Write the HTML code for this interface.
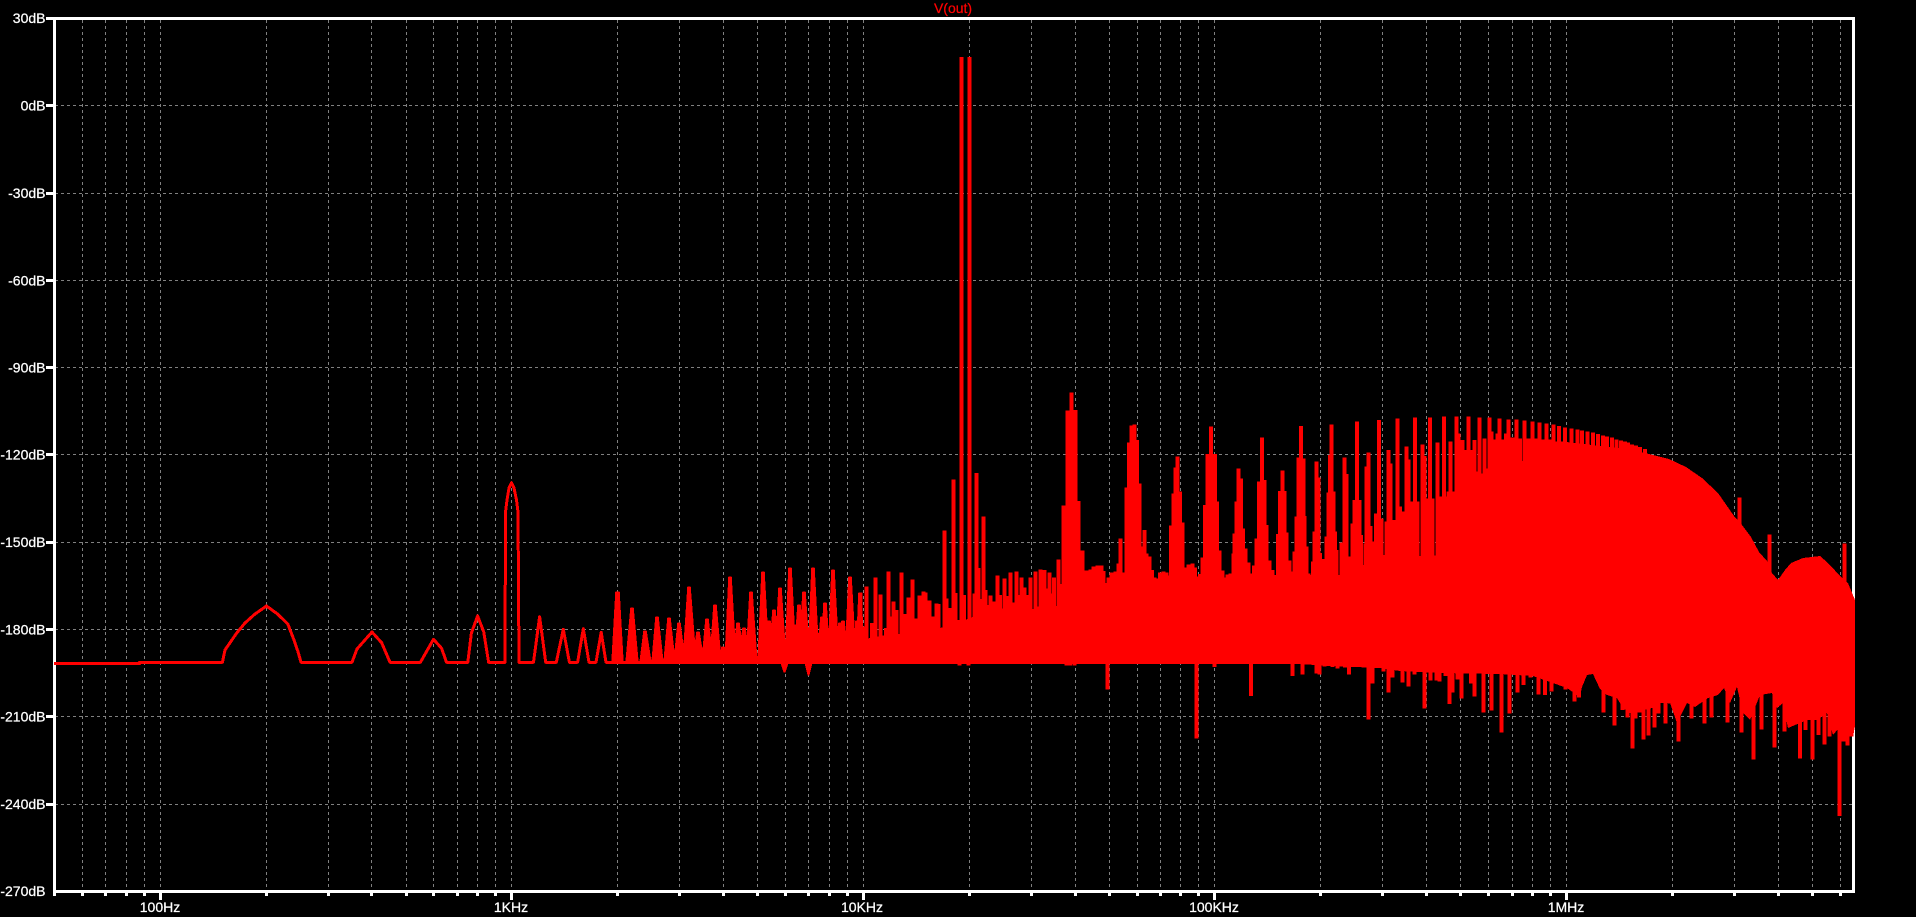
<!DOCTYPE html>
<html><head><meta charset="utf-8"><title>V(out)</title>
<style>
html,body{margin:0;padding:0;background:#000;width:1916px;height:917px;overflow:hidden}
svg{display:block}
text{font-family:"Liberation Sans",sans-serif;font-size:14px;fill:#fff;stroke:#fff;stroke-width:.25px}
</style></head><body>
<svg width="1916" height="917" viewBox="0 0 1916 917" xmlns="http://www.w3.org/2000/svg">
<rect width="1916" height="917" fill="#000"/>
<g stroke="#808080" stroke-width="1" stroke-dasharray="3 3" fill="none" shape-rendering="crispEdges">
<path d="M55 105.5H1853M55 193.5H1853M55 280.5H1853M55 367.5H1853M55 454.5H1853M55 542.5H1853M55 629.5H1853M55 716.5H1853M55 804.5H1853"/>
<path d="M82.5 20V890M105.5 20V890M126.5 20V890M144.5 20V890M160.5 20V890M266.5 20V890M328.5 20V890M371.5 20V890M406.5 20V890M433.5 20V890M457.5 20V890M477.5 20V890M495.5 20V890M511.5 20V890M617.5 20V890M679.5 20V890M723.5 20V890M757.5 20V890M785.5 20V890M808.5 20V890M829.5 20V890M847.5 20V890M863.5 20V890M969.5 20V890M1031.5 20V890M1075.5 20V890M1109.5 20V890M1137.5 20V890M1160.5 20V890M1180.5 20V890M1198.5 20V890M1214.5 20V890M1320.5 20V890M1382.5 20V890M1426.5 20V890M1460.5 20V890M1488.5 20V890M1512.5 20V890M1532.5 20V890M1550.5 20V890M1566.5 20V890M1672.5 20V890M1734.5 20V890M1778.5 20V890M1812.5 20V890M1840.5 20V890"/>
</g>
<g stroke="#fff" fill="none" shape-rendering="crispEdges">
<path stroke-width="3" d="M46 18.5H1855M54.5 17V893M53 891.5H1855M1853.5 17V893"/>
<path stroke-width="3" d="M46 105.5H54M46 193.5H54M46 280.5H54M46 367.5H54M46 454.5H54M46 542.5H54M46 629.5H54M46 716.5H54M46 804.5H54"/>
<path stroke-width="3" d="M54.5 892V896M82.5 892V896M105.5 892V896M126.5 892V896M144.5 892V896M266.5 892V896M328.5 892V896M371.5 892V896M406.5 892V896M433.5 892V896M457.5 892V896M477.5 892V896M495.5 892V896M617.5 892V896M679.5 892V896M723.5 892V896M757.5 892V896M785.5 892V896M808.5 892V896M829.5 892V896M847.5 892V896M969.5 892V896M1031.5 892V896M1075.5 892V896M1109.5 892V896M1137.5 892V896M1160.5 892V896M1180.5 892V896M1198.5 892V896M1320.5 892V896M1382.5 892V896M1426.5 892V896M1460.5 892V896M1488.5 892V896M1512.5 892V896M1532.5 892V896M1550.5 892V896M1672.5 892V896M1734.5 892V896M1778.5 892V896M1812.5 892V896M1840.5 892V896"/>
<path stroke-width="3" d="M160.5 892V900M511.5 892V900M863.5 892V900M1214.5 892V900M1566.5 892V900"/>
</g>
<g text-anchor="end">
<text x="45.5" y="23">30dB</text>
<text x="45.5" y="110.5">0dB</text>
<text x="45.5" y="198">-30dB</text>
<text x="45.5" y="285.5">-60dB</text>
<text x="45.5" y="372.5">-90dB</text>
<text x="45.5" y="459.5">-120dB</text>
<text x="45.5" y="547">-150dB</text>
<text x="45.5" y="634.5">-180dB</text>
<text x="45.5" y="721.5">-210dB</text>
<text x="45.5" y="809">-240dB</text>
<text x="45.5" y="896">-270dB</text>
</g>
<g text-anchor="middle">
<text x="160" y="912">100Hz</text>
<text x="511" y="912">1KHz</text>
<text x="862" y="912">10KHz</text>
<text x="1214" y="912">100KHz</text>
<text x="1566" y="912">1MHz</text>
<text x="953" y="13" style="fill:#ff0000;stroke:#ff0000">V(out)</text>
</g>
<g shape-rendering="crispEdges">
<path fill="none" stroke="#f00" stroke-width="3" stroke-linejoin="round" d="M54 663.5H139.5V662.3H222.4L225 650L236.7 633L245 623L255 614L266.5 606L277.5 614L287.8 624L294 640L298 651.7L301 662.3H352L357 649L372 632L381.6 642.7L390 662.3H420.4L433.5 639.3L441.6 648.3L446.5 662.3H467.8L471.4 633L477.6 616L483.7 631.7L488.6 662.3H505L505.5 512L507 500L509 488L511.5 482.7L514 488L516.5 500L518 512L519 662.3H533.5L539.6 616.7L545.7 662.3H556.3L563.3 629.3L569.4 662.3H577.6L583.3 628.7L589 662.3H596L601.2 632.3L606 662.3H760"/>
<path fill="#f00" stroke="#f00" stroke-width="1.5" d="M612 663L616 592H619L623 663ZM626 663L631 608H633L638 663ZM640 663L644 631H646L651 663ZM652 663L656 617H658L663 663ZM664 663L668 618H670L675 663ZM674 663L678 623H680L685 663ZM683 663L688 587H690L696 663ZM693 663L697 632H699L704 663ZM702 663L706 619H708L713 663ZM710 663L714 605H716L721 663ZM719 663L722 647H724L728 663ZM725 663L729 577H731L736 663ZM733 663L737 623H739L744 663ZM739 663L743 628H745L750 663ZM746 663L750 592H752L757 663ZM754 663L757 657H758L762 663ZM758 663L762 572H764L769 663ZM765 663L768 621H770L774 663ZM769 663L773 610H775L780 663ZM775 663L779 588H781L786 663ZM785 663L789 568H791L796 663ZM791 663L794 625H796L800 663ZM794 663L798 605H800L804 663ZM799 663L803 592H805L810 663ZM808 663L812 568H814L819 663ZM813 663L816 633H818L822 663ZM817 663L821 617H823L827 663ZM821 663L824 603H826L830 663ZM825 663L828 637H830L834 663ZM828 663L832 570H834L839 663ZM833 663L836 635H838L841 663ZM836 663L839 623H841L845 663ZM839 663L842 621H844L848 663ZM843 663L846 642H847L850 663ZM845 663L849 577H851L856 663ZM850 663L853 633H855L858 663ZM853 663L856 621H858L862 663ZM856 663L859 593H861L864 663Z"/>
<path fill="#f00" stroke="#f00" stroke-width="1" d="M781 663L784 672H785L788 663ZM805 663L808 675H809L812 663Z"/>
<polygon fill="#f00" points="760,664 760,648 782,648 782,664 788,664 788,642 806,642 806,664 811,664 811,640 835,640 860,640 880,636 900,634 920,630 940,628 960,622 975,616 990,612 1010,612 1040,608 1060,606 1066,598 1075,596 1085,588 1105,583 1196,583 1260,580 1300,575 1340,575 1365,564 1384,562 1410,556 1434,556 1450,548 1470,540 1480,532 1490,526 1500,522 1510,518 1514,506 1518,468 1522,461 1532,461 1535,444 1544,441 1564,441.7 1592,445 1625,449 1645,453 1669,459 1686,467 1702,478 1718,493 1734,516 1742,525 1751,537 1759,552 1767,561 1772,573 1778,580 1785,570 1791,563 1803,558 1820,556 1828,563 1842,578 1848,583 1855,600 1855,726 1853,737 1843,723 1833,735 1827,713 1817,720 1807,720 1788,728 1783,703 1777,708 1772,693 1760,695 1750,720 1743,713 1737,687 1730,703 1724,688 1718,695 1708,698 1695,707 1687,703 1677,723 1670,703 1660,703 1652,708 1637,712 1630,713 1623,708 1617,698 1607,695 1600,689 1593,674 1587,675 1582,687 1580,697 1567,688 1550,682 1533,676 1500,674 1440,673 1400,671 1380,668 1330,666 1300,664"/>
<path fill="none" stroke="#f00" stroke-width="4" d="M860.7 592.7V664M863.3 626.7V664M866.3 586.7V664M869 641.7V664M872 623V664M875.3 577.7V664M878 641.7V664M880.3 594.7V664M883.3 637V664M886 628V664M888.3 571.7V664M890.7 616.7V664M893.3 601.7V664M896.7 610V664M898.7 635V664M901.3 572.7V664M904.7 614V664M908.3 597.3V664M910.3 646.7V664M912.3 579.3V664M916 618.7V664M919.3 595.7V664M921.3 626.7V664M923.7 591.7V664M925.7 592.7V664M927.7 605V664M929.7 600.7V664M932.3 616.7V664M936.3 603.3V664M938.7 604V664M941 633V664M944.3 530.7V664M946.7 598.3V664M949.3 608V664M953.3 479.3V664M955.7 593V664M957.7 620V664M961.3 57V664M964 595V664M966 628V664M969.3 57V664M972.7 623V664M974.7 593.3V664M976.7 473V664M978.7 568V664M980.7 599V664M983.3 516.7V664M985.3 590V664M986.7 610V664M988.3 605V664M990.7 595.7V664M992.3 615.7V664M994.3 601.7V664M997.3 575.7V664M1000 595V664M1002.3 608.3V664M1004.3 578.3V664M1007 596V664M1008.7 617.3V664M1010.3 572.7V664M1013.3 602.7V664M1016.3 571.7V664M1018.7 595V664M1021.3 577.7V664M1024.7 587.7V664M1027 595V664M1030.3 577.3V664M1033 616.7V664M1035.3 571.7V664M1038 606.7V664M1040.3 569.7V664M1042.3 595V664M1044.3 570V664M1046.7 588.3V664M1049.3 572.7V664M1051.7 593.3V664M1054 577.3V664M1056.7 606V664M1058.3 559.3V664M1060.3 611V664M1062 584V664M1063.6 505.5V664M1067.3 410.7V664M1069.3 528.3V664M1071.3 392.7V664M1073.3 535.7V664M1075.3 410V664M1078.3 501V664M1080.3 581.7V664M1082.3 550.7V664M1084.3 586.7V664M1086.3 570.7V664M1088.3 590V664M1090.3 569.3V664M1093.3 566.7V664M1095.3 590V664M1097.3 565.7V664M1099.3 566.7V664M1101.3 565.7V664M1103.3 571V664M1105.3 585V664M1108.3 577.3V664M1111.7 572.7V664M1115.3 571.7V664M1118.3 563.3V664M1120.3 538.3V664M1123.3 572.7V664M1126.3 487.7V664M1129 442.7V664M1131.3 425.3V664M1134.7 424.3V664M1137 440V664M1139.3 483.3V664M1142 546.7V664M1144.3 530V664M1146.7 553.3V664M1149.3 556.7V664M1152 570V664M1154.3 577.3V664M1157.3 578.7V664M1160 572.3V664M1163.3 571.7V664M1166.7 572.7V664M1169 575.7V664M1171 525.7V664M1173.3 493.3V664M1175.3 467.3V664M1177.3 456.7V664M1180 491.7V664M1182.7 522.7V664M1185.3 567.3V664M1188.3 564.7V664M1192.3 563.3V664M1195 567.3V664M1196.3 585V664M1198.3 576.7V664M1200 574V664M1202.3 557.7V664M1205 505V664M1207.3 454V664M1211 426.7V664M1215 454V664M1217 501.7V664M1219.3 550.7V664M1222.7 570.7V664M1225 577.3V664M1227.7 574.3V664M1230.7 573.3V664M1233.3 553.3V664M1234.7 533.3V664M1236.7 501.7V664M1238.7 468.7V664M1241 478.3V664M1243 528.3V664M1245.3 548.3V664M1248.3 562.3V664M1251.3 573.3V664M1254 565.7V664M1256.7 538.3V664M1259 481.7V664M1262 437.3V664M1264.3 480V664M1266.7 525V664M1269.3 560.7V664M1272.3 570V664M1275.3 575V664M1278 534V664M1280 491V664M1282.3 470.3V664M1284.3 491V664M1286.7 532.7V664M1289.7 560.7V664M1292 571.7V664M1294.3 551.7V664M1296.7 516.7V664M1298.7 457.7V664M1301 426V664M1303.3 458.3V664M1304.7 516V664M1306.7 546.7V664M1308.7 573.3V664M1311 575.7V664M1313 561.7V664M1314.3 531.7V664M1316.3 461.7V664M1318.3 477.3V664M1320 553V664M1322.3 559V664M1324.3 563.3V664M1326.7 536.7V664M1328.3 492.3V664M1330 455V664M1331.3 424.7V664M1333.3 491.7V664M1335 531.7V664M1336.7 550V664M1339.3 577.7V664M1341.7 542.7V664M1344.3 457.3V664M1346.3 474V664M1348.7 556.7V664M1351 560V664M1352.7 523.3V664M1354.3 500V664M1357 421.7V664M1359.3 500V664M1361 535V664M1363.3 567.7V664M1365.7 543.3V664M1366.3 466.7V664M1368.3 452.3V664M1370.3 526V664M1372.3 555V664M1374 541.7V664M1376 513.3V664M1379 420V664M1381.7 518.3V664M1383.3 565V664M1385.3 555V664M1386.7 521.7V664M1388.3 450V664M1390.3 463.3V664M1392.7 555V664M1394.7 520V664M1397.7 418.3V664M1400 506.7V664M1402 546.7V664M1404 511.7V664M1406.3 446.7V664M1408.3 459.3V664M1410.3 556.7V664M1412.7 501.7V664M1415 417.7V664M1417.3 501.7V664M1419.3 563.3V664M1422.3 444.3V664M1424.3 456V664M1426 553V664M1427.7 498.3V664M1430 417.3V664M1432.3 498.3V664M1434.3 563.3V664M1437.3 442.3V664M1440 497.3V664M1441.7 496.7V664M1444 416.7V664M1446 496.7V664M1448.3 491.7V664M1450.7 441.7V664M1452.7 491.7V664M1454.3 496.7V664M1456.7 416.7V664M1458.7 433.3V664M1460.3 521.7V664M1462.3 440V664M1464.3 450V664M1466 476.7V664M1468.3 416.7V664M1470.7 478.3V664M1472.7 450V664M1474.3 440V664M1476.7 471.7V664M1479.3 417.7V664M1481.7 473.3V664M1484.3 438.3V664M1487 468.3V664M1489.3 417.7V664M1491.7 431.7V664M1494 439.3V664M1497.3 433.3V664M1499.3 418.7V664M1501.7 439.3V664M1503.7 439.3V664M1506 433.3V664M1508.3 419.3V664M1512.3 437.7V664M1516.3 419.3V664M1520 438.3V664M1524.3 420.7V664M1528.3 438.3V664M1532.3 421.7V664M1535.3 438.3V664M1539.3 422.7V664M1543.3 439.3V664M1546.3 423.3V664M1550 439.3V664M1553.3 424.7V664M1559 426V664M1565.2 427.7V664M1571.3 428.7V664M1577.4 429.3V664M1582.2 430.3V664M1587.5 431.7V664M1593.2 432.7V664M1598 434V664M1603 435.3V664M1607 436.7V664M1611.8 437.7V664M1616.7 439.3V664M1620.8 440.7V664M1624.8 441.7V664M1628 442.7V664M1632 444.3V664M1636.2 445.7V664M1640.2 447V664M1645 449V664M1739.6 497.3V664M1769.7 534.3V664M1844.7 543.3V664"/>
<path fill="none" stroke="#f00" stroke-width="4" d="M959.3 660V665.5M968.3 660V665.5M1066.7 660V665.5M1070 660V665.5M1074.3 660V665.5M1107.3 660V689.3M1196.3 660V738.5M1214.3 660V667M1251 660V696M1292.3 660V676M1302.3 660V674.7M1316.7 660V673.3M1319.3 660V674.7M1324.3 660V666.7M1332.7 660V667M1337.3 660V668.3M1345 660V667.7M1349 660V674.7M1368.3 660V719.3M1372.3 660V683.3M1383.3 660V671.7M1388.3 660V692.3M1392.3 660V677.3M1402.3 660V682.3M1408.3 660V686.7M1414.3 660V674.7M1424.3 660V708.3M1430.3 660V680.7M1436.7 660V680.7M1439.3 660V681.3M1445.3 660V676M1449.3 660V704M1452.3 660V692.3M1457.3 660V679.3M1461.7 660V698.3M1466.7 660V670M1471 660V683.3M1474.3 660V696.7M1483.3 660V712.3M1491.7 660V710.7M1494.3 660V671.7M1501.7 660V732.3M1509.3 660V713.3M1517.3 660V692.3M1523.3 660V685M1530.7 660V677.3M1538.3 660V694.3M1545 660V695M1551.7 660V691.7M1560 660V675M1565.7 660V689.3M1571.7 660V686.7M1574.3 660V701.7M1579 660V697.3M1603.7 660V712.3M1614.3 660V725.3M1622.3 660V710M1627.3 660V717.3M1632.3 660V748.3M1635.7 660V718.3M1639.3 660V712.3M1643.3 660V739.3M1648.3 660V735.7M1654.3 660V727.3M1658.3 660V713.3M1665.3 660V723.3M1670 660V703.3M1678.3 660V741.3M1691.7 660V718.3M1704.3 660V723.3M1711.3 660V717.3M1727.3 660V722.3M1741.3 660V732.3M1753.3 660V759.3M1761.7 660V729.3M1774.3 660V747.3M1784.7 660V731.7M1800 660V758.3M1805.7 660V730M1812.3 660V759.3M1818.3 660V735M1824.3 660V744.3M1829.3 660V736.7M1839.3 660V816M1843.3 660V741.7M1847.7 660V745.7M1851.7 660V736.7"/>
</g>
</svg>
</body></html>
